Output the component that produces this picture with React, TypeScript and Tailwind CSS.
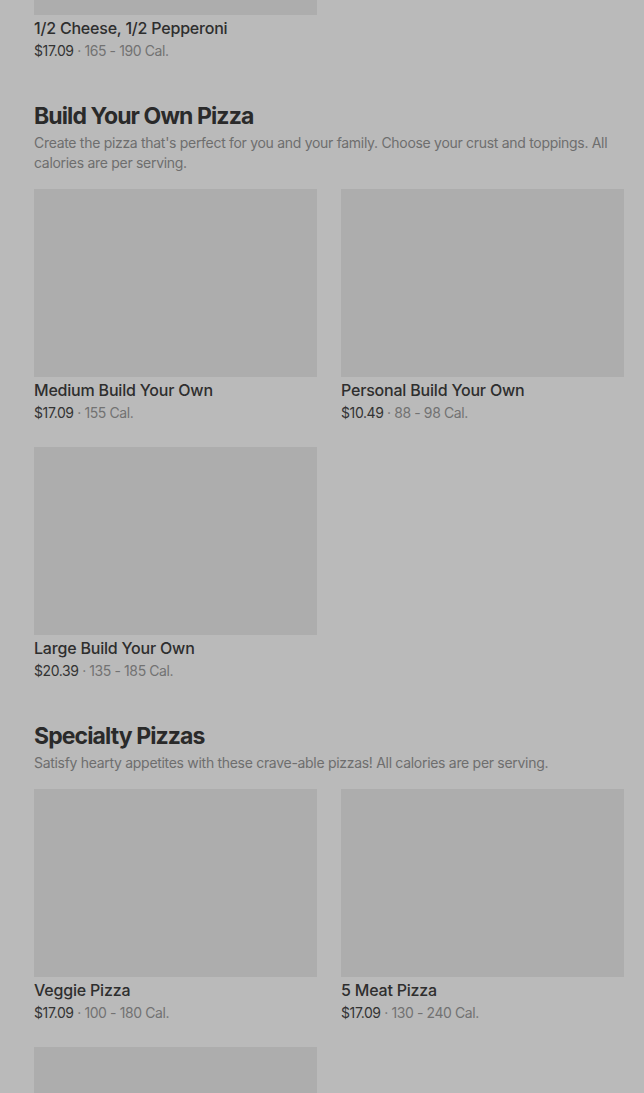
import React from 'react';

interface Item {
  name: string;
  price: string;
  cal: string;
}

interface Section {
  title?: string;
  description?: string;
  items: Item[];
}

const sections: Section[] = [
  {
    items: [{ name: '1/2 Cheese, 1/2 Pepperoni', price: '$17.09', cal: '165 - 190 Cal.' }],
  },
  {
    title: 'Build Your Own Pizza',
    description:
      "Create the pizza that's perfect for you and your family. Choose your crust and toppings. All calories are per serving.",
    items: [
      { name: 'Medium Build Your Own', price: '$17.09', cal: '155 Cal.' },
      { name: 'Personal Build Your Own', price: '$10.49', cal: '88 - 98 Cal.' },
      { name: 'Large Build Your Own', price: '$20.39', cal: '135 - 185 Cal.' },
    ],
  },
  {
    title: 'Specialty Pizzas',
    description: 'Satisfy hearty appetites with these crave-able pizzas! All calories are per serving.',
    items: [
      { name: 'Veggie Pizza', price: '$17.09', cal: '100 - 180 Cal.' },
      { name: '5 Meat Pizza', price: '$17.09', cal: '130 - 240 Cal.' },
      // below the fold, only the photo shows
      { name: '', price: '', cal: '' },
    ],
  },
];

function MenuCard({ item }: { item: Item }) {
  return (
    <div>
      <div className="h-[188px] bg-[#adadad]" />
      {item.name && (
        <>
          <div className="mt-[3px] text-[16px] leading-[20px] font-medium tracking-[-0.2px] text-[#2e2e2e]">
            {item.name}
          </div>
          <div className="mt-[3px] text-[14px] leading-[20px] tracking-[-0.4px] text-[#333333]">
            {item.price}
            <span className="text-[#727272]"> · {item.cal}</span>
          </div>
        </>
      )}
    </div>
  );
}

export default function App() {
  return (
    <div
      className="h-[1093px] overflow-hidden bg-[#bababa]"
      style={{ fontFamily: 'Inter, "Noto Sans", sans-serif' }}
    >
      <div className="-mt-[173px] pl-[34px] pr-[20px] flex flex-col gap-[39px]">
        {sections.map((section, i) => (
          <section key={i}>
            {section.title && (
              <div className="mb-[16px]">
                <h2 className="text-[23px] leading-[32px] font-bold tracking-[-0.9px] text-[#2a2a2a]">
                  {section.title}
                </h2>
                <p className="mt-[1px] text-[14px] leading-[20px] tracking-[-0.3px] text-[#6e6e6e]">
                  {section.description}
                </p>
              </div>
            )}
            <div className="grid grid-cols-2 gap-x-[24px] gap-y-[24px]">
              {section.items.map((item, j) => (
                <MenuCard key={j} item={item} />
              ))}
            </div>
          </section>
        ))}
      </div>
    </div>
  );
}
